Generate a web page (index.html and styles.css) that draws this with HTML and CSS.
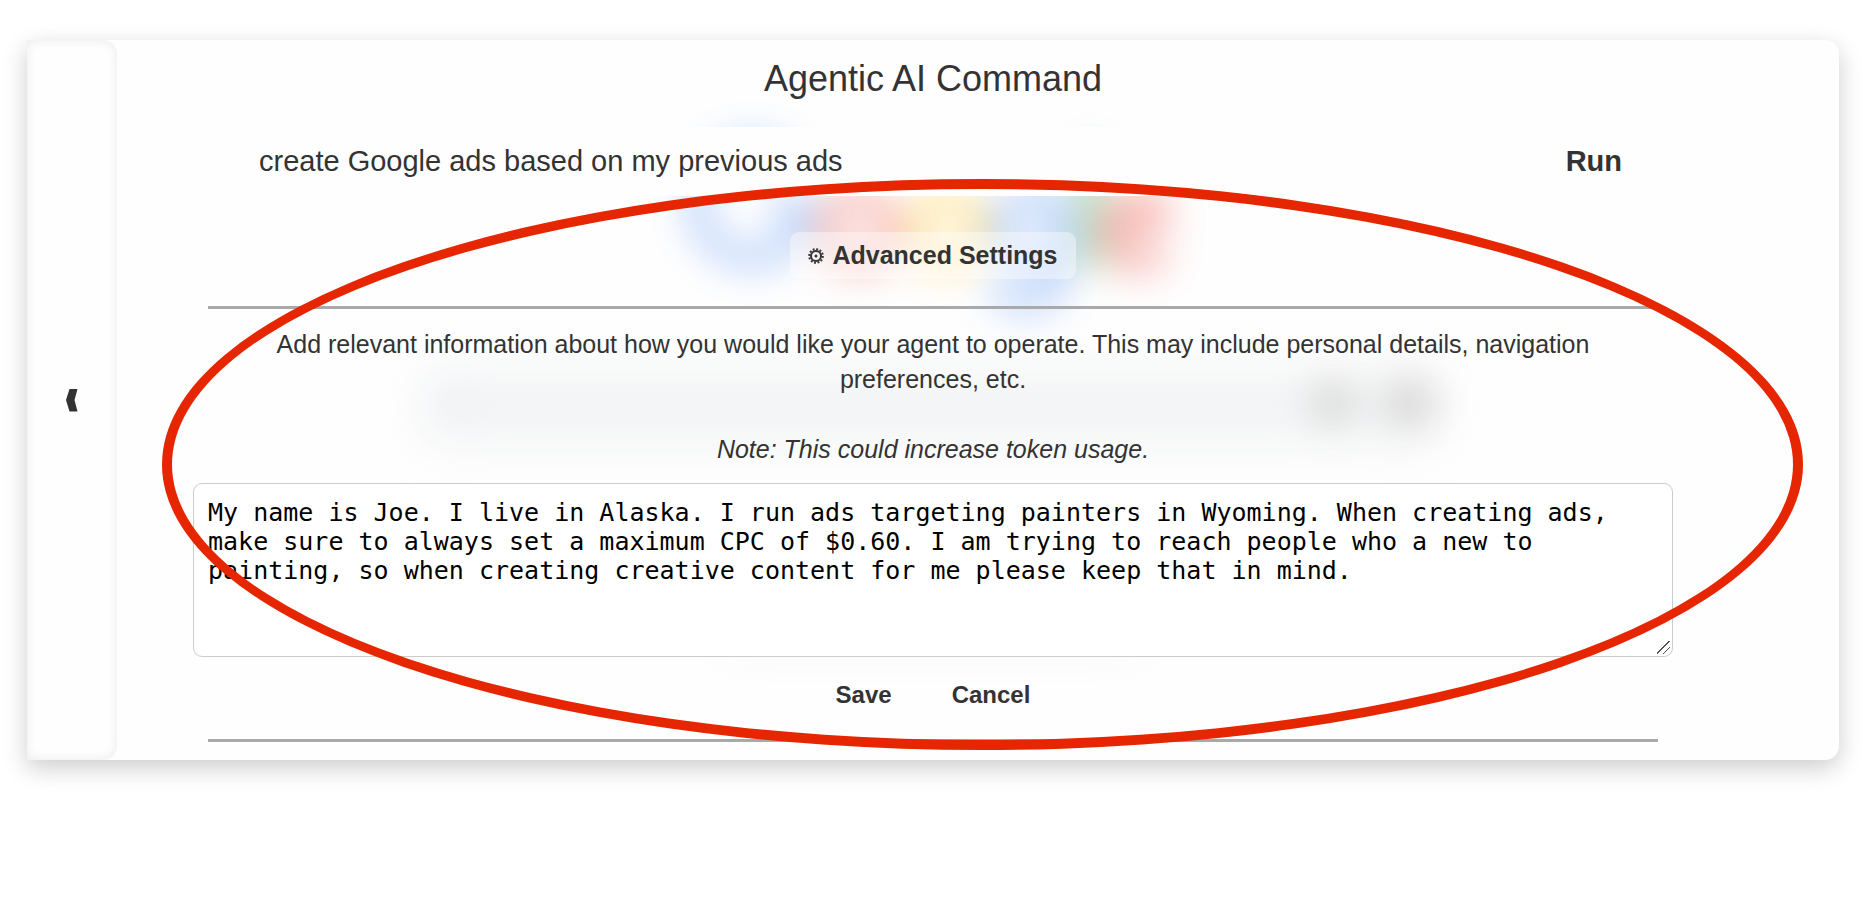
FILE: index.html
```html
<!DOCTYPE html>
<html lang="en">
<head>
<meta charset="utf-8">
<title>Agentic AI Command</title>
<link rel="stylesheet" href="styles.css">
</head>
<body>
<div class="panel">
  <svg class="backdrop" viewBox="0 0 1812 720" aria-hidden="true">
    <defs>
      <filter id="soft" x="-30%" y="-80%" width="160%" height="260%" color-interpolation-filters="sRGB"><feGaussianBlur stdDeviation="19"/></filter>
      <filter id="soft-logo" x="-30%" y="-60%" width="160%" height="220%" color-interpolation-filters="sRGB"><feGaussianBlur stdDeviation="10"/></filter>
    </defs>
    <g class="logo" transform="translate(660 103) scale(1.84)" filter="url(#soft-logo)" fill="none" stroke-width="11">
      <path stroke="#4285f4" d="M59 14A30 30 0 1 0 65 37H46"/>
      <circle stroke="#ea4335" cx="93.500" cy="47" r="17.500"/>
      <circle stroke="#fbbc05" cx="141.500" cy="47" r="17.500"/>
      <path stroke="#4285f4" d="M204 47a17 17 0 1 0-34 0 17 17 0 0 0 34 0zM202 27v43c0 20-28 22-34 6"/>
      <path stroke="#34a853" d="M219 4v64" stroke-width="13"/>
      <path stroke="#ea4335" d="M229 52l29-13c-7-16-29-9-29 9 0 20 22 22 30 9"/>
    </g>
    <g filter="url(#soft)">
      <rect x="390" y="326" width="1026" height="82" rx="36" fill="#f4f5f6"/>
      <circle cx="428" cy="363" r="16" fill="#eceff3"/>
      <circle cx="1306" cy="363" r="22" fill="#d4d4d4"/>
      <circle cx="1383" cy="363" r="26" fill="#d6d6d6"/>
    </g>
    <rect x="700" y="590" width="410" height="30" fill="#fafafc" filter="url(#soft)"/>
  </svg>

  <aside class="rail">
    <button class="rail-toggle" type="button" aria-label="Collapse panel">
      <svg width="12" height="24" viewBox="0 0 12 24"><path fill="#333" d="M3.500 1h8L8.500 12l3 11.500h-8L0 12z"/></svg>
    </button>
  </aside>

  <main class="content">
    <h1 class="title">Agentic AI Command</h1>
    <form class="command">
      <input class="command-input" type="text" aria-label="Command" value="create Google ads based on my previous ads">
      <button class="run" type="button">Run</button>
    </form>
    <button class="advanced" type="button">
      <svg class="gear" width="16" height="18" viewBox="0 0 16 18"><g fill="none" stroke="#333"><circle cx="8" cy="9" r="5" stroke-width="2"/><circle cx="8" cy="9" r="6.800" stroke-width="2" stroke-dasharray="1.900 1.660"/></g><circle cx="8" cy="9" r="1.500" fill="#333"/></svg>
      Advanced Settings
    </button>
    <hr class="rule">
    <section class="settings">
      <label class="help" for="agent-info">Add relevant information about how you would like your agent to operate. This may include personal details, navigation preferences, etc.<br><br><em>Note: This could increase token usage.</em></label>
      <textarea class="info" id="agent-info">My name is Joe. I live in Alaska. I run ads targeting painters in Wyoming. When creating ads, make sure to always set a maximum CPC of $0.60. I am trying to reach people who a new to painting, so when creating creative content for me please keep that in mind.</textarea>
      <div class="actions">
        <button class="action" type="button">Save</button>
        <button class="action" type="button">Cancel</button>
      </div>
    </section>
    <hr class="rule">
  </main>

  <div class="highlight"></div>
</div>
</body>
</html>
```
FILE: styles.css
```css
* {
  box-sizing: border-box;
}

body {
  margin: 0;
  padding: 40px 33px 40px 27px;
  background: #fff;
  color: #333;
  font-family: "Liberation Sans", Arial, sans-serif;
}

button {
  border: 0;
  background: none;
  color: inherit;
  font-family: inherit;
  font-weight: 700;
}

.panel {
  position: relative;
  display: grid;
  grid-template-columns: 90px 1fr 90px;
  border-radius: 0 14px 14px 0;
  background: #fefefe;
  box-shadow: 0 8px 24px rgba(0, 0, 0, 0.2);
}

.backdrop {
  position: absolute;
  top: 0;
  left: 0;
  width: 100%;
  height: 100%;
}

.logo {
  opacity: 0.4;
}

.rail {
  display: flex;
  align-items: center;
  justify-content: center;
  border-radius: 0 14px 14px 0;
  box-shadow: inset 0 0 12px rgba(0, 0, 0, 0.08);
}

.rail-toggle {
  display: flex;
  padding: 8px;
}

.content {
  position: relative;
  display: flex;
  flex-direction: column;
  padding: 17px 91px 18px;
}

.title {
  margin: 0 0 26px;
  font-size: 36px;
  font-weight: 400;
  line-height: 44px;
  text-align: center;
}

.command {
  display: flex;
  align-items: center;
  padding: 0 36px 0 51px;
  border-radius: 14px;
  background: #fefefe;
}

.command-input {
  flex: 1;
  height: 69px;
  padding: 0;
  border: 0;
  background: none;
  color: inherit;
  font-family: inherit;
  font-size: 29px;
}

.run {
  padding: 0;
  font-size: 29px;
}

.advanced {
  display: flex;
  align-items: center;
  align-self: center;
  gap: 8px;
  margin: 36px 0 27px;
  padding: 0 18px;
  border-radius: 9px;
  background: rgba(255, 255, 255, 0.4);
  font-size: 25px;
  line-height: 47px;
}

.rule {
  width: 100%;
  margin: 0;
  border: 0;
  border-top: 3px solid #a9a9a9;
}

.settings {
  display: flex;
  flex-direction: column;
  padding: 18px 0 24px;
}

.help {
  padding: 0 36px;
  font-size: 25px;
  line-height: 35px;
  text-align: center;
}

.info {
  height: 174px;
  margin: 16px -15px 18px;
  padding: 14px;
  border: 1px solid #ccc;
  border-radius: 9px;
  background: #fff;
  color: #000;
  font-family: "DejaVu Sans Mono", monospace;
  font-size: 25px;
  line-height: 29px;
  resize: vertical;
}

.info::-webkit-resizer {
  background: linear-gradient(135deg, transparent 44%, #555 45%, #555 50%, transparent 51%, transparent 70%, #555 71%, #555 76%, transparent 77%) 0 0 / 13px 13px no-repeat;
}

.actions {
  display: flex;
  justify-content: center;
  gap: 24px;
}

.action {
  padding: 0 18px;
  font-size: 24px;
  line-height: 40px;
}

.highlight {
  position: absolute;
  top: 139px;
  right: 36px;
  bottom: 10px;
  left: 135px;
  border: 10px solid #e62600;
  border-radius: 50%;
  pointer-events: none;
}
```
